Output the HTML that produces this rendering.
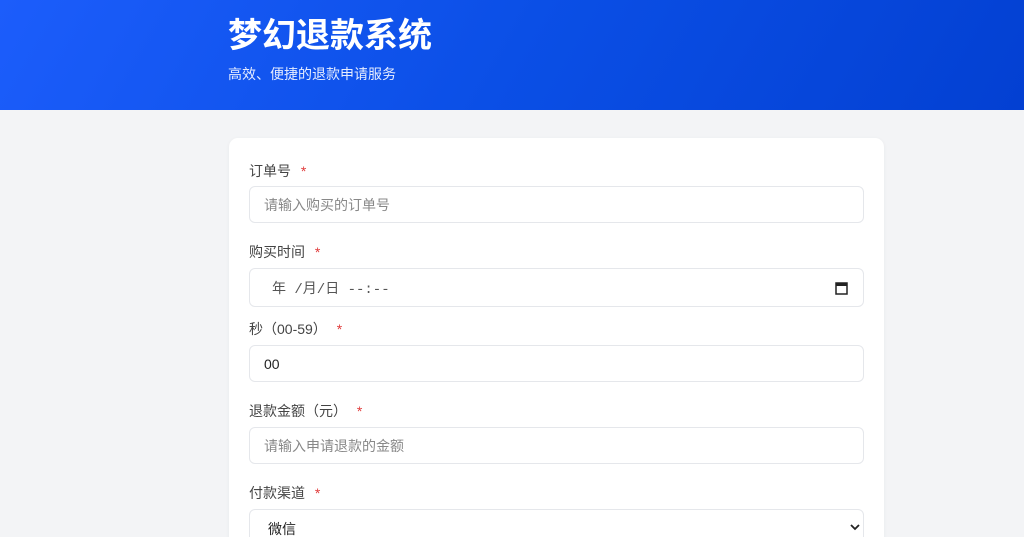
<!DOCTYPE html>
<html><head><meta charset="utf-8"><style>
*{margin:0;padding:0;box-sizing:border-box}
html,body{width:1024px;height:537px;overflow:hidden}
body{background:#f3f4f6;font-family:"Liberation Sans","Noto Sans CJK SC",sans-serif;position:relative}
.hd{position:absolute;left:0;top:0;width:1024px;height:110px;background:linear-gradient(120deg,#1c5dfb 0%,#0b4fe6 50%,#0340d2 100%)}
.t{position:absolute;left:228px;top:8px;color:#fff;font-size:34px;font-weight:bold}
.s{position:absolute;left:228px;top:64px;color:#e6edff;font-size:14px}
.card{position:absolute;left:229px;top:138px;width:655px;height:420px;background:#fff;border-radius:9px;box-shadow:0 1px 4px rgba(0,0,0,.05)}
.l{position:absolute;left:249px;font-size:14px;color:#444}
.l b{color:#e03b3b;font-weight:normal;margin-left:6px}
.i{position:absolute;left:249px;width:615px;border:1px solid #e5e7eb;border-radius:6px;font-size:14px;color:#888;padding-left:14px;display:flex;align-items:center}
</style></head><body>
<div class="hd"></div>
<div class="t">梦幻退款系统</div>
<div class="s">高效、便捷的退款申请服务</div>
<div class="card"></div>
<div class="l" style="top:161px">订单号 <b>*</b></div>
<div class="i" style="top:186px;height:37px">请输入购买的订单号</div>
<div class="l" style="top:242px">购买时间 <b>*</b></div>
<div class="i" style="top:268px;height:39px;color:#555;padding-left:22px;font-family:'Liberation Mono','Noto Sans CJK SC',monospace">年 /月/日 --:--<svg style="position:absolute;right:15px;top:12px" width="13" height="14" viewBox="0 0 13 14"><rect x="1" y="2" width="11" height="11" fill="none" stroke="#222" stroke-width="1.5"/><rect x="1" y="2" width="11" height="3" fill="#222"/></svg></div>
<div class="l" style="top:319px">秒（00-59） <b>*</b></div>
<div class="i" style="top:345px;height:37px;color:#222">00</div>
<div class="l" style="top:401px">退款金额（元） <b>*</b></div>
<div class="i" style="top:427px;height:37px">请输入申请退款的金额</div>
<div class="l" style="top:483px">付款渠道 <b>*</b></div>
<div class="i" style="top:509px;height:40px;color:#222;padding-left:18px;align-items:flex-start;padding-top:9px">微信<svg style="position:absolute;right:3px;top:13px" width="10" height="8" viewBox="0 0 10 8"><path d="M1 2l4 4 4-4" fill="none" stroke="#222" stroke-width="1.8"/></svg></div>
</body></html>
